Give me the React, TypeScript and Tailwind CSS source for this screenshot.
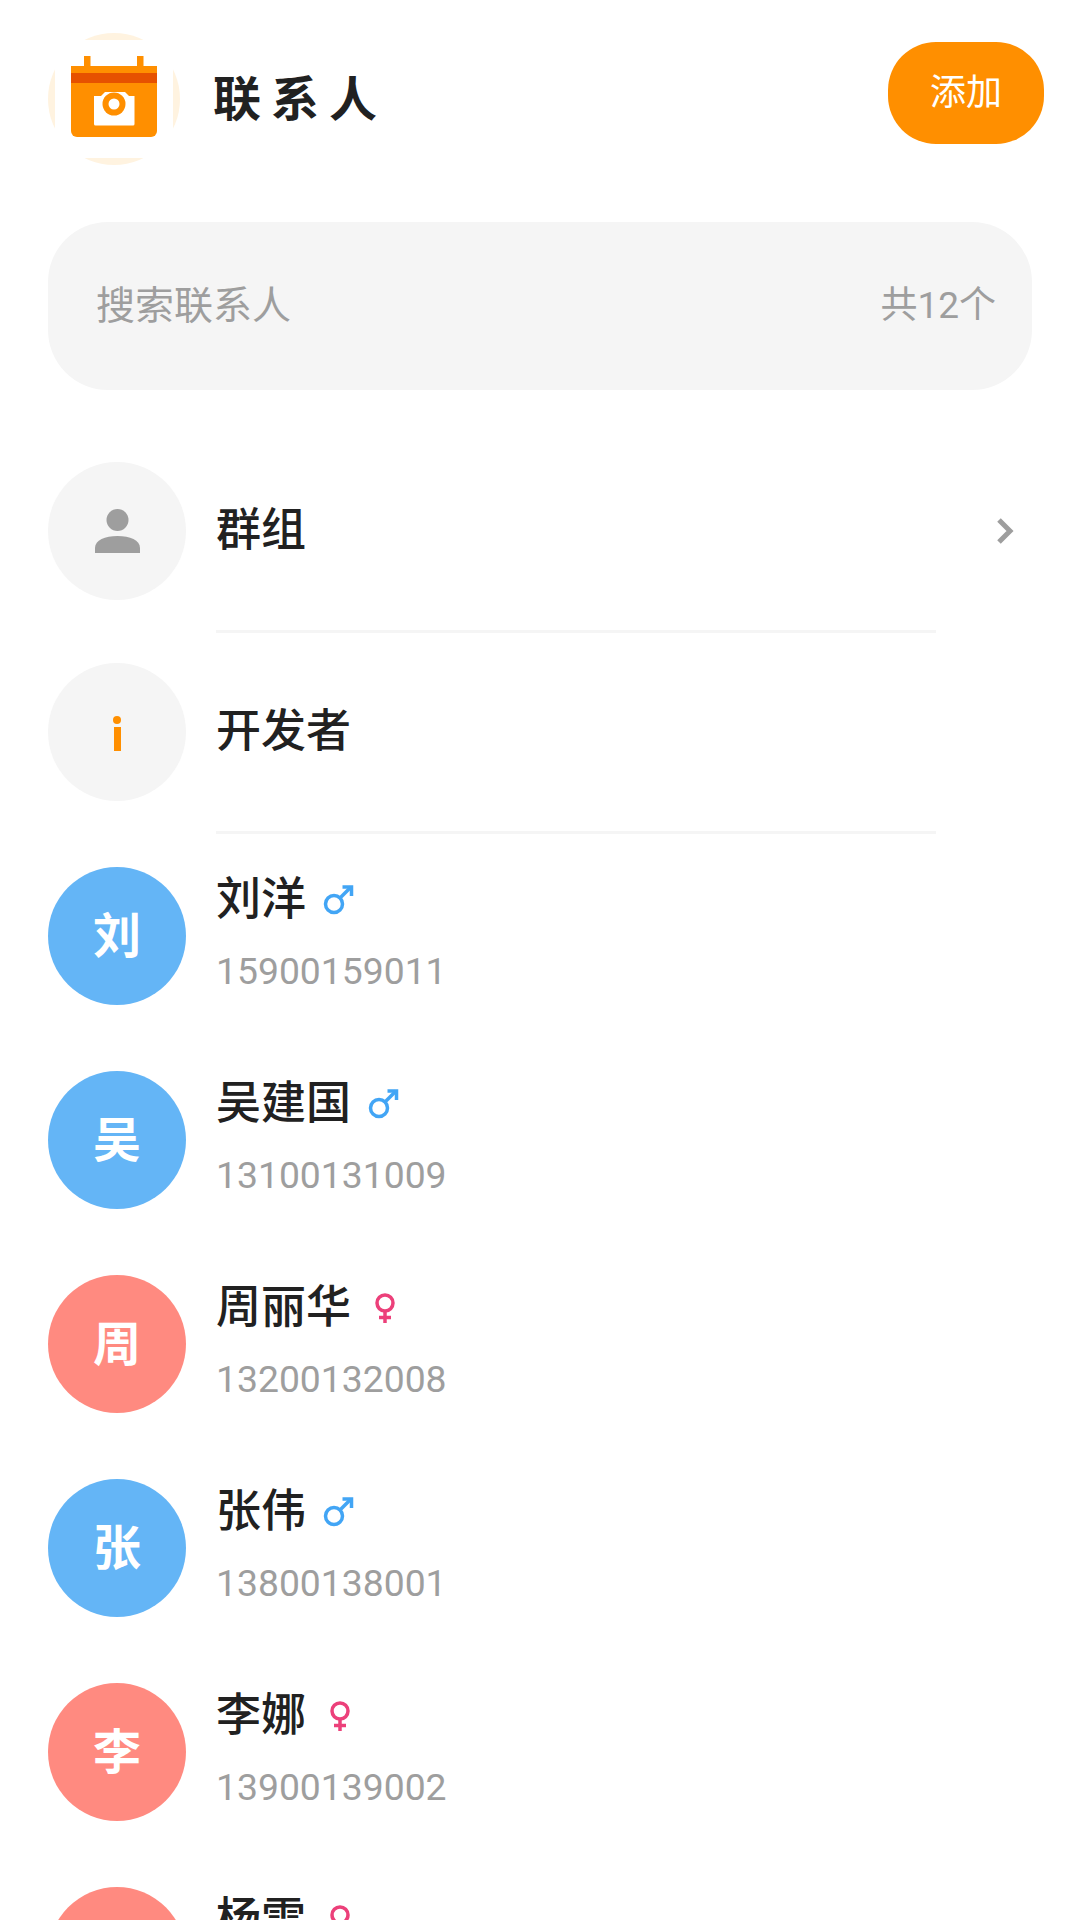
const contacts = [
  { name: "刘洋", phone: "15900159011", gender: "male" },
  { name: "吴建国", phone: "13100131009", gender: "male" },
  { name: "周丽华", phone: "13200132008", gender: "female" },
  { name: "张伟", phone: "13800138001", gender: "male" },
  { name: "李娜", phone: "13900139002", gender: "female" },
  { name: "杨雪", phone: "13700137003", gender: "female" },
];

const fontStack = "font-['Noto_Sans_CJK_SC','Noto_Sans',sans-serif]";

function Logo() {
  return (
    <div className="relative h-[132px] w-[132px] shrink-0 rounded-full bg-[#fff3e0]">
      <div className="absolute left-[7px] top-[7px] h-[118px] w-[118px] rounded-[4px] bg-white" />
      <svg className="absolute left-0 top-0" width="132" height="132" viewBox="0 0 132 132">
        <rect x="36" y="23" width="6.500" height="12" fill="#ff8f00" />
        <rect x="89" y="23" width="6.500" height="12" fill="#ff8f00" />
        <path d="M23 33h86v65a6 6 0 0 1-6 6H29a6 6 0 0 1-6-6z" fill="#ff8f00" />
        <rect x="23" y="40" width="86" height="10" fill="#e65100" />
        <path d="M46 63h7l4-4h20l4 4h5.500v28a1.500 1.500 0 0 1-1.500 1.500H47.500a1.500 1.500 0 0 1-1.500-1.500z" fill="#fff" />
        <circle cx="66" cy="71" r="11.500" fill="#ff8f00" />
        <circle cx="66" cy="71" r="5.500" fill="#fff" />
      </svg>
    </div>
  );
}

function GenderIcon({ gender }: { gender: string }) {
  if (gender === "male") {
    return (
      <svg width="44" height="44" viewBox="0 0 44 44" fill="none" stroke="#42a5f5" strokeWidth="3.500">
        <circle cx="16" cy="28" r="8.500" />
        <path d="M22 22l11-11" />
        <path d="M24.500 11h9v9" />
      </svg>
    );
  }
  return (
    <svg width="44" height="44" viewBox="0 0 44 44" fill="none" stroke="#ec407a" strokeWidth="3.500">
      <circle cx="22" cy="19" r="8" />
      <path d="M22 27v12" />
      <path d="M16 33.500h12" />
    </svg>
  );
}

function ContactRow({ name, phone, gender }: { name: string; phone: string; gender: string }) {
  const color = gender === "male" ? "bg-[#64b5f6]" : "bg-[#ff8a80]";
  return (
    <div className="flex h-[204px] shrink-0 items-start">
      <div className={`flex h-[138px] w-[138px] shrink-0 items-center justify-center rounded-full ${color} pb-[8px] text-[48px] font-bold leading-none text-white`}>
        {name[0]}
      </div>
      <div className="ml-[30px] flex flex-col">
        <div className="flex h-[62px] items-center text-[45px] font-[450] leading-none text-[#212121]">
          <span className="pb-[6px]">{name}</span>
          <span className="ml-[12px]">
            <GenderIcon gender={gender} />
          </span>
        </div>
        <div className="mt-[20px] font-['Roboto','Noto_Sans',sans-serif] text-[37.3px] leading-[44px] text-[#9e9e9e]">
          {phone}
        </div>
      </div>
    </div>
  );
}

export default function App() {
  return (
    <div className={`flex h-[1920px] w-[1080px] flex-col overflow-hidden bg-white ${fontStack}`}>
      <header className="flex shrink-0 items-start pl-[48px] pr-[36px] pt-[33px]">
        <Logo />
        <h1 className="ml-[33px] mt-[28px] text-[48px] font-bold leading-[68px] tracking-[10px] text-[#212121]">联系人</h1>
        <button className="ml-auto mt-[9px] flex h-[102px] w-[156px] items-start justify-center rounded-[48px] bg-[#ff8f00] pt-[24px] text-[36px] leading-[46px] text-white">
          添加
        </button>
      </header>

      <div className="ml-[48px] mt-[57px] flex h-[168px] w-[984px] shrink-0 items-center justify-between rounded-[60px] bg-[#f5f5f5] pl-[48px] pr-[36px] text-[39px] text-[#9e9e9e]">
        <span className="pb-[8px]">搜索联系人</span>
        <span className="font-['Roboto','Noto_Sans_CJK_SC',sans-serif] text-[37px]">共12个</span>
      </div>

      <div className="ml-[48px] mt-[72px] flex w-[984px] shrink-0 items-center">
        <div className="flex h-[138px] w-[138px] shrink-0 items-center justify-center rounded-full bg-[#f5f5f5]">
          <svg width="45" height="44" viewBox="0 0 45 44" fill="#9e9e9e">
            <circle cx="22.500" cy="11" r="11" />
            <path d="M0 44v-5c0-8 10-12 22.500-12s22.500 4 22.500 12v5z" />
          </svg>
        </div>
        <span className="ml-[30px] pb-[8px] text-[45px] font-[450] text-[#212121]">群组</span>
        <svg className="ml-auto mr-[15px]" width="24" height="30" viewBox="0 0 24 30" fill="none" stroke="#9e9e9e" strokeWidth="5">
          <path d="M6 4l11 11L6 26" />
        </svg>
      </div>
      <div className="ml-[216px] mt-[30px] h-[3px] w-[720px] shrink-0 bg-[#f5f5f5]" />

      <div className="ml-[48px] mt-[30px] flex shrink-0 items-center">
        <div className="flex h-[138px] w-[138px] shrink-0 flex-col items-center justify-center rounded-full bg-[#f5f5f5] pt-[2px]">
          <div className="h-[8px] w-[8px] rounded-full bg-[#ff8f00]" />
          <div className="mt-[3px] h-[24px] w-[7px] bg-[#ff8f00]" />
        </div>
        <span className="ml-[30px] pb-[8px] text-[45px] font-[450] text-[#212121]">开发者</span>
      </div>
      <div className="ml-[216px] mt-[30px] h-[3px] w-[720px] shrink-0 bg-[#f5f5f5]" />

      <div className="ml-[48px] mt-[33px] flex shrink-0 flex-col">
        {contacts.map((contact) => (
          <ContactRow key={contact.name} {...contact} />
        ))}
      </div>
    </div>
  );
}
